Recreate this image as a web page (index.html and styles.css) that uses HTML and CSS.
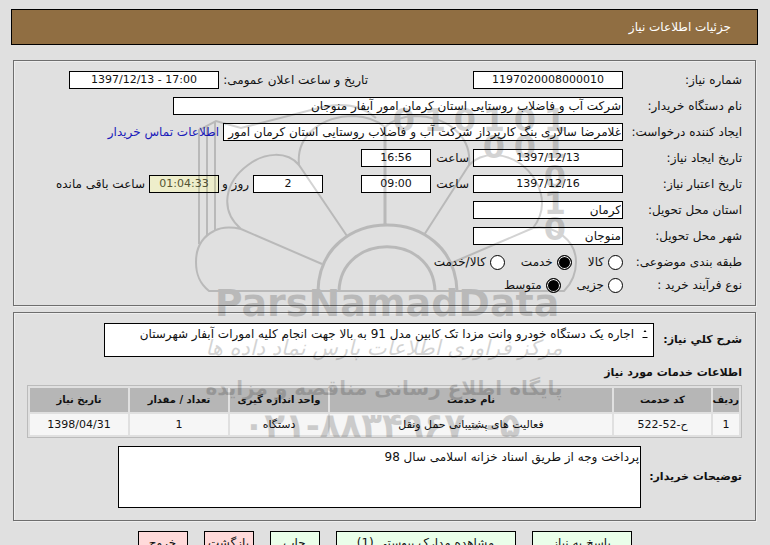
FILE: index.html
```html
<!DOCTYPE html>
<html lang="fa" dir="rtl">
<head>
<meta charset="utf-8">
<title>جزئیات اطلاعات نیاز</title>
<link rel="stylesheet" href="styles.css">
</head>
<body>
<header class="banner"><h1>جزئیات اطلاعات نیاز</h1></header>
<main class="page">
  <section class="panel">
    <div class="row"><label class="name" for="num">شماره نیاز:</label><input class="w150 num" id="num" value="1197020008000010"><label class="announce" for="ann">تاریخ و ساعت اعلان عمومی:</label><input class="w150 num" id="ann" value="17:00 - 1397/12/13" dir="rtl"></div>
    <div class="row"><label class="name" for="org">نام دستگاه خریدار:</label><input class="w450" id="org" value="شرکت آب و فاضلاب روستایی استان کرمان امور آبفار منوجان"></div>
    <div class="row"><label class="name" for="creator">ایجاد کننده درخواست:</label><input class="w400" id="creator" value="غلامرضا سالاری بنگ کارپرداز شرکت آب و فاضلاب روستایی استان کرمان امور آبفار منوجان"><a href="#contact">اطلاعات تماس خریدار</a></div>
    <div class="row"><label class="name" for="cd">تاریخ ایجاد نیاز:</label><input class="w150 num" id="cd" value="1397/12/13"><label class="hour" for="ch">ساعت</label><input class="w70 num" id="ch" value="16:56"></div>
    <div class="row"><label class="name" for="vd">تاریخ اعتبار نیاز:</label><input class="w150 num" id="vd" value="1397/12/16"><label class="hour" for="vh">ساعت</label><input class="w70 num" id="vh" value="09:00"><input class="w70 num days" id="days" value="2"><label class="dayname" for="days">روز و</label><input class="w70 num timer" id="left" value="01:04:33"><label for="left">ساعت باقی مانده</label></div>
    <div class="row"><label class="name" for="prov">استان محل تحویل:</label><input class="w150" id="prov" value="کرمان"></div>
    <div class="row"><label class="name" for="city">شهر محل تحویل:</label><input class="w150" id="city" value="منوجان"></div>
    <div class="row choice"><span class="name">طبقه بندی موضوعی:</span><label><input type="radio" name="cat">کالا</label><label><input type="radio" name="cat" checked>خدمت</label><label><input type="radio" name="cat">کالا/خدمت</label></div>
    <div class="row choice"><span class="name">نوع فرآیند خرید :</span><label><input type="radio" name="proc">جزیی</label><label><input type="radio" name="proc" checked>متوسط</label></div>
  </section>
  <section class="panel">
    <div class="block"><label for="desc">شرح کلي نیاز:</label>
      <div class="descbox"><textarea id="desc">اجاره یک دستگاه خودرو وانت مزدا تک کابین مدل 91 به بالا جهت انجام کلیه امورات آبفار شهرستان</textarea><svg class="spin" viewBox="0 0 8 14" aria-hidden="true"><path d="M2.500 5l1.500-2 1.500 2zM1.500 10h5v1h-5z"/></svg></div></div>
    <h2>اطلاعات خدمات مورد نیاز</h2>
    <table>
      <colgroup><col class="c-row"><col class="c-code"><col><col class="c-std"><col class="c-std"><col class="c-std"></colgroup>
      <thead><tr><th>ردیف</th><th>کد خدمت</th><th>نام خدمت</th><th>واحد اندازه گیری</th><th>تعداد / مقدار</th><th>تاریخ نیاز</th></tr></thead>
      <tbody><tr><td>1</td><td>ح-52-522</td><td>فعالیت های پشتیبانی حمل ونقل</td><td>دستگاه</td><td>1</td><td>1398/04/31</td></tr></tbody>
    </table>
    <div class="block notes"><label for="notes">توضیحات خریدار:</label><textarea id="notes">پرداخت وجه از طریق اسناد خزانه اسلامی سال 98</textarea></div>
  </section>
  <div class="actions">
    <button class="b100">پاسخ به نیاز</button><button class="b180">مشاهده مدارک پیوستی (1)</button><button>چاپ</button><button class="red">بازگشت</button><button class="red">خروج</button>
  </div>
</main>
<svg class="mark" viewBox="0 0 400 360" direction="ltr" aria-hidden="true">
  <g fill="none" stroke="#000" stroke-width="2">
    <path d="M28 201C18 193 15 184 15 172C15 157 21 147 33 141C42 136 51 137 60 139C38 120 44 92 67 75C84 62 106 61 118 75C115 46 140 26 173 26Q192 27 204 37Q215 27 233 26C266 26 291 46 288 75C302 61 324 63 340 74C360 90 369 116 352 138C374 135 395 150 395 172C395 184 391 193 383 201Z"/>
    <path d="M60 139L141 174M118 75L166 146M288 75L243 145M352 138L268 174"/>
    <path stroke-width="3" d="M204 37V135M137 201C139 113 273 113 276 201M158 201C160 142 252 142 254 201"/>
    <path d="M18 154V40L35 31L60 38L134 19Q172 8 195 28M26 146V36M34 141V31"/>
  </g>
  <g class="bits">
    <text x="223" y="41">0</text><text x="254" y="41">1</text><text x="284" y="41">0</text><text x="313" y="41">1</text><text x="344" y="41">0</text><text x="374" y="41">1</text>
    <text x="313" y="68">0</text><text x="344" y="68">0</text><text x="374" y="68">1</text>
    <text x="374" y="98">0</text><text x="374" y="124">1</text><text x="374" y="150">0</text>
  </g>
  <text class="brand" x="206" y="226">ParsNamadData</text>
  <text class="script" x="203" y="265">مرکز فرآوری اطلاعات پارس نماد داده ها</text>
  <text class="site" x="203" y="305">پایگاه اطلاع رسانی مناقصه و مزایده</text>
  <text class="phone" x="201" y="347">۰۲۱-۸۸۳۴۹۶۷۰-۵</text>
</svg>
</body>
</html>
```
FILE: styles.css
```css
* { box-sizing: border-box; }
html { scrollbar-width: none; background: #e0e0e0; }
body { margin: 9px 12px 0 11px; position: relative; font: 12px/18px "DejaVu Sans", sans-serif; color: #111; }
input, textarea, button { font: inherit; color: #111; }
.banner { height: 36px; padding: 0 26px; border: 1px solid #000; background: #906e42; display: flex; align-items: center; }
h1 { margin: 0; font-size: 12px; font-weight: 400; color: #fff; }
.page { padding: 15px 2px 0; }
.panel { border: 1px solid #6e6e6e; box-shadow: inset 1px 1px #eee, 1px 1px #eee; padding: 10px 13px 6px; margin-bottom: 6px; }
.row { display: flex; align-items: center; gap: 4px; height: 18px; margin-bottom: 8px; white-space: nowrap; }
.name { width: 115px; flex: none; }
.row input:not([type=radio]) { height: 18px; border: 1px solid #000; background: #fff; padding: 0 1px; flex: none; }
.row input.num { text-align: center; font-size: 11px; }
.w70 { width: 70px; }
.w150 { width: 150px; }
.w400 { width: 400px; }
.w450 { width: 450px; }
.announce { width: 145px; margin-right: 101px; }
.hour { width: 34px; }
.dayname { width: 26px; }
.days { margin-right: 34px; }
.row input.timer:not([type=radio]) { background: #eeeecb; color: #555533; }
a { color: #1a1aba; text-decoration: none; }
.choice { margin-bottom: 5px; }
.choice label { display: flex; align-items: center; gap: 4px; margin-left: 12px; }
input[type=radio] { appearance: none; width: 15px; height: 15px; margin: 0; border: 1px solid #000; border-radius: 50%; background: #fff; }
input[type=radio]:checked { background: #000; box-shadow: inset 0 0 0 1px #fff; }
.block { display: flex; align-items: center; gap: 4px; font-weight: 700; font-size: 11px; }
.block label { width: 84px; flex: none; white-space: nowrap; }
.block textarea { font-weight: 400; font-size: 12px; line-height: 16px; display: block; border: 1px solid #000; background: #fff; resize: none; overflow: hidden; margin: 0; padding: 2px; }
.descbox { position: relative; width: 550px; }
.descbox textarea { width: 100%; height: 34px; padding: 2px 19px; }
.spin { position: absolute; right: 5px; top: 4px; width: 8px; height: 14px; }
h2 { margin: 8px 0 4px; font-size: 11px; line-height: 16px; }
table { width: 100%; table-layout: fixed; border: 1px solid #bbb; border-spacing: 2px; text-align: center; font-size: 11px; line-height: 16px; }
th { background: #b6b6b6; height: 24px; padding: 0; font-size: 10px; white-space: nowrap; }
td { background: #f6f6f6; height: 21px; padding: 0; }
.c-row { width: 26px; }
.c-code { width: 97px; }
.c-std { width: 98px; }
.notes { margin-top: 8px; padding-bottom: 6px; }
.notes label { width: 97px; }
.notes textarea { width: 523px; height: 62px; padding: 2px 1px; font-size: 12px; }
.actions { display: flex; justify-content: center; gap: 16px; padding-top: 4px; }
button { width: 50px; height: 23px; border: 1px solid #000; padding: 0; background: #eaffea; white-space: nowrap; line-height: 18px; }
.b100 { width: 100px; }
.b180 { width: 180px; }
.red { background: #ffdada; }
.mark { position: absolute; left: 50%; top: 81px; width: 400px; margin-left: -204px; opacity: .17; pointer-events: none; overflow: visible; }
.mark text { text-anchor: middle; }
.brand { font: 700 38px "DejaVu Sans", sans-serif; }
.bits { font: 700 32px "DejaVu Sans", sans-serif; }
.script { font: italic 21px "DejaVu Sans", sans-serif; }
.site { font: 700 20px "DejaVu Sans", sans-serif; }
.phone { font: 700 34px "DejaVu Sans", sans-serif; }
```
